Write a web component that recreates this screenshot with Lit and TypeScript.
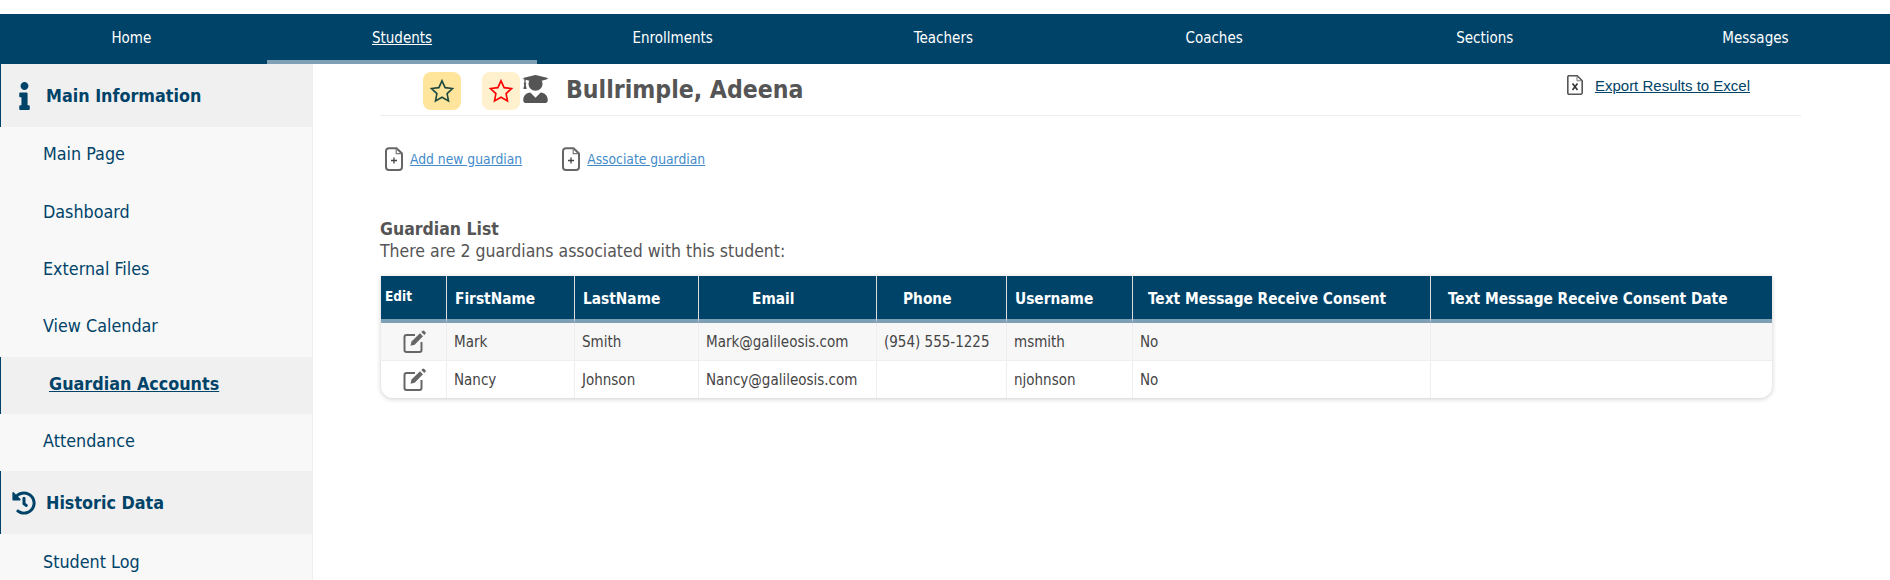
import { LitElement, html, css } from "lit";
import { customElement } from "lit/decorators.js";

const NAV = ["Home", "Students", "Enrollments", "Teachers", "Coaches", "Sections", "Messages"];
const ROWS = [
  ["Mark", "Smith", "Mark@galileosis.com", "(954) 555-1225", "msmith", "No", ""],
  ["Nancy", "Johnson", "Nancy@galileosis.com", "", "njohnson", "No", ""],
];
const HEAD = ["FirstName", "LastName", "Email", "Phone", "Username", "Text Message Receive Consent", "Text Message Receive Consent Date"];
const HCLS = ["h-first", "h-last", "h-email", "h-phone", "h-user", "h-consent", "h-date"];

const star = (color: string) => html`<svg class="star" viewBox="0 0 24 24"><path d="M12 2.6l2.9 6.3 6.8.8-5 4.7 1.3 6.8-6-3.4-6 3.4 1.3-6.8-5-4.7 6.8-.8z" fill="none" stroke=${color} stroke-width="1.5" stroke-linejoin="miter"/></svg>`;
const docPlus = html`<svg class="doc" viewBox="0 0 18 24"><path d="M4 1.2h7.5L17 6.500V20a3 3 0 0 1-3 3H4a3 3 0 0 1-3-3V4.200a3 3 0 0 1 3-3z" fill="none" stroke="#666" stroke-width="2"/><path d="M11.200 1.200v5.500H17" fill="none" stroke="#777" stroke-width="1.200"/><path d="M9 10.500v6M6 13.500h6" stroke="#444" stroke-width="1.300"/></svg>`;
const docX = html`<svg class="xls" viewBox="0 0 16 20"><path d="M1.600.8h8.600l5 5v12a1.400 1.400 0 0 1-1.400 1.400H1.600A1.400 1.400 0 0 1 .8 18V2A1.400 1.400 0 0 1 1.600.8z" fill="#fff" stroke="#555" stroke-width="1.600"/><path d="M10 .8v5h5.200" fill="none" stroke="#777"/><path d="M5.500 8.500l5 6.500M10.500 8.500l-5 6.500" stroke="#333" stroke-width="1.600"/></svg>`;
const edit = html`<svg class="edit" viewBox="0 0 24 24"><path d="M13 5H4.500A2 2 0 0 0 2.500 7v13a2 2 0 0 0 2 2h13a2 2 0 0 0 2-2v-8" fill="none" stroke="#666" stroke-width="2"/><path d="M8.500 15.800l1-4.200 8.500-8.300 3 3-8.300 8.500z" fill="#666"/><path d="M19.300 2l1-1a1.400 1.400 0 0 1 2 0l1 1a1.400 1.400 0 0 1 0 2l-1 1z" fill="#666"/></svg>`;
const info = html`<svg class="ic-info" viewBox="0 0 192 512"><path fill="#004369" d="M20 424.229h20V279.771H20c-11.046 0-20-8.954-20-20V212c0-11.046 8.954-20 20-20h112c11.046 0 20 8.954 20 20v212.229h20c11.046 0 20 8.954 20 20V492c0 11.046-8.954 20-20 20H20c-11.046 0-20-8.954-20-20v-47.771c0-11.046 8.954-20 20-20zM96 0C56.235 0 24 32.235 24 72s32.235 72 72 72 72-32.235 72-72S135.764 0 96 0z"/></svg>`;
const history = html`<svg class="ic-hist" viewBox="0 0 512 512"><path fill="#004369" d="M504 255.531c.253 136.64-111.18 248.372-247.82 248.468-59.015.042-113.223-20.53-155.822-54.911-11.077-8.94-11.905-25.541-1.839-35.607l11.267-11.267c8.609-8.609 22.353-9.551 31.891-1.984C173.062 425.135 212.781 440 256 440c101.705 0 184-82.311 184-184 0-101.705-82.311-184-184-184-48.814 0-93.149 18.969-126.068 49.932l50.754 50.754c10.08 10.08 2.941 27.314-11.313 27.314H24c-8.837 0-16-7.163-16-16V38.627c0-14.254 17.234-21.393 27.314-11.314l49.372 49.372C129.209 34.136 189.552 8 256 8c136.81 0 247.747 110.78 248 247.531zm-180.912 78.784l9.823-12.63c8.138-10.463 6.253-25.542-4.21-33.679L288 256.349V152c0-13.255-10.745-24-24-24h-16c-13.255 0-24 10.745-24 24v135.651l65.409 50.874c10.463 8.137 25.541 6.253 33.679-4.21z"/></svg>`;
const grad = html`<svg class="grad" viewBox="0 0 448 512"><path fill="#555" d="M319.4 320.6L224 416l-95.4-95.4C57.1 323.7 0 382.2 0 454.4v9.6c0 26.5 21.5 48 48 48h352c26.5 0 48-21.5 48-48v-9.6c0-72.2-57.1-130.7-128.6-133.8zM13.6 79.8l6.4 1.5v58.4c-7 4.2-12 11.5-12 20.3 0 8.4 4.6 15.4 11.1 19.7L3.5 242c-1.7 6.9 2.1 14 7.6 14h41.8c5.5 0 9.3-7.1 7.6-14l-15.6-62.3C51.4 175.4 56 168.4 56 160c0-8.8-5-16.1-12-20.3V87.1l66 15.9c-8.6 17.2-14 36.4-14 57 0 70.7 57.3 128 128 128s128-57.3 128-128c0-20.6-5.3-39.8-14-57l96.3-23.2c18.2-4.4 18.2-27.1 0-31.5l-190.4-46c-13-3.1-26.7-3.1-39.7 0L13.6 48.2c-18.1 4.4-18.1 27.2 0 31.6z"/></svg>`;

@customElement("app-root")
export class AppRoot extends LitElement {
  static styles = css`
    :host { display: block; width: 1890px; height: 580px; overflow: hidden; background: #fff; font-family: "DejaVu Sans Condensed", "DejaVu Sans", sans-serif; color: #555; }
    a { color: inherit; }
    .nav { margin-top: 14px; height: 50px; background: #004369; display: grid; grid-template-columns: repeat(7, 270.7px); margin-left: -4px; width: 1894px; }
    .nav a { display: flex; align-items: center; justify-content: center; color: #fff; text-decoration: none; font-size: 15px; box-sizing: border-box; padding-top: 1px; border-bottom: 4px solid transparent; }
    .nav a.on { text-decoration: underline; border-bottom-color: #7f9fb5; }
    .body { display: flex; height: 516px; }
    .side { width: 313px; flex: none; background: #f8f8f8; border-right: 1px solid #eee; box-sizing: border-box; color: #004369; }
    .sh { height: 63px; display: flex; align-items: center; background: #f0f0f0; border-left: 1px solid #004369; font-weight: 700; font-size: 17.800px; position: relative; padding-left: 45px; box-sizing: border-box; }
    .sh .slot { position: absolute; left: 0; top: 0; bottom: 0; width: 46px; display: flex; align-items: center; justify-content: center; }
    .ic-info { height: 28px; width: 11px; }
    .ic-hist { height: 24px; width: 24px; }
    .si { height: 57.400px; display: flex; align-items: center; padding: 0 0 4px 43px; font-size: 17.800px; box-sizing: border-box; }
    .si.cur { background: #f0f0f0; border-left: 1px solid #004369; padding-left: 48px; font-weight: 700; text-decoration: underline; }
    .main { flex: 1; min-width: 0; padding-left: 67px; }
    .title { width: 1421px; height: 51px; border-bottom: 1px solid #eee; box-sizing: content-box; display: flex; align-items: flex-start; position: relative; }
    .sbox { width: 38px; height: 38px; border-radius: 8px; display: flex; align-items: center; justify-content: center; margin-top: 8px; }
    .s1 { background: #ffe59b; margin-left: 43px; }
    .s2 { background: #fff1cd; margin-left: 21px; }
    .star { width: 26px; height: 26px; }
    .grad { width: 25px; height: 28px; margin: 11px 0 0 3px; }
    .name { font-size: 24.600px; font-weight: 700; margin: 10px 0 0 18px; line-height: 32px; color: #555; }
    .export { margin-left: auto; margin-right: 51px; margin-top: 11px; display: flex; align-items: center; gap: 12px; font: 15px "Liberation Sans", Arial, sans-serif; color: #004369; }
    .xls { width: 16px; height: 20px; }
    .links { display: flex; margin: 31px 0 0 5px; height: 24px; align-items: center; }
    .links a { display: flex; align-items: center; font-size: 13.750px; color: #428bca; }
    .links a + a { margin-left: 40px; }
    .doc { width: 18px; height: 24px; margin-right: 7px; }
    .gl { margin-top: 47px; font-size: 17.500px; line-height: 22px; color: #555; }
    .gl b { display: block; }
    .tbl { margin: 14px 0 0 1px; width: 1391px; border-collapse: separate; border-spacing: 0; table-layout: fixed; border-radius: 0 0 12px 12px; box-shadow: 0 1px 5px rgba(0,0,0,.2); overflow: hidden; }
    .c0 { width: 66px; }
    .c1 { width: 128px; }
    .c2 { width: 124px; }
    .c3 { width: 178px; }
    .c4 { width: 130px; }
    .c5 { width: 126px; }
    .c6 { width: 298px; }
    th { background: #004369; color: #fff; height: 41px; border-bottom: 4px solid #7f9fb5; border-right: 1px solid #ddd; font-weight: 700; font-size: 15.300px; padding: 2px 8px 0; text-align: left; box-sizing: content-box; white-space: nowrap; }
    th:last-child, td:last-child { border-right: 0; }
    th.h-edit { font-size: 13.500px; padding: 0 0 3px 4px; height: 40px; }
    th.h-email { padding-left: 53px; }
    th.h-phone { padding-left: 26px; }
    th.h-consent { padding-left: 15px; }
    th.h-date { padding-left: 17px; }
    td { height: 37px; padding: 1px 7px 0; font-size: 15px; color: #444; border-right: 1px solid #eee; white-space: nowrap; box-sizing: border-box; }
    tr.a td { background: #f7f7f7; border-bottom: 1px solid #eee; height: 38px; }
    td.e { padding: 0; text-align: center; }
    .edit { width: 24px; height: 24px; display: inline-block; vertical-align: middle; }
  `;

  render() {
    return html`
      <div class="nav">${NAV.map((n) => html`<a href="#" class=${n === "Students" ? "on" : ""}>${n}</a>`)}</div>
      <div class="body">
        <aside class="side">
          <div class="sh"><span class="slot">${info}</span>Main Information</div>
          <div class="si">Main Page</div>
          <div class="si">Dashboard</div>
          <div class="si">External Files</div>
          <div class="si">View Calendar</div>
          <div class="si cur">Guardian Accounts</div>
          <div class="si">Attendance</div>
          <div class="sh"><span class="slot">${history}</span>Historic Data</div>
          <div class="si">Student Log</div>
        </aside>
        <main class="main">
          <div class="title">
            <span class="sbox s1">${star("#1f4a3f")}</span>
            <span class="sbox s2">${star("#f00")}</span>
            ${grad}
            <span class="name">Bullrimple, Adeena</span>
            <a href="#" class="export">${docX}<span>Export Results to Excel</span></a>
          </div>
          <div class="links">
            <a href="#">${docPlus}<span>Add new guardian</span></a>
            <a href="#">${docPlus}<span>Associate guardian</span></a>
          </div>
          <div class="gl"><b>Guardian List</b>There are 2 guardians associated with this student:</div>
          <table class="tbl">
            <colgroup>
              <col class="c0" /><col class="c1" /><col class="c2" /><col class="c3" />
              <col class="c4" /><col class="c5" /><col class="c6" /><col />
            </colgroup>
            <thead><tr>
              <th class="h-edit">Edit</th>
              ${HEAD.map((h, i) => html`<th class=${HCLS[i]}>${h}</th>`)}
            </tr></thead>
            <tbody>
              ${ROWS.map((r, i) => html`<tr class=${i === 0 ? "a" : ""}><td class="e">${edit}</td>${r.map((c) => html`<td>${c}</td>`)}</tr>`)}
            </tbody>
          </table>
        </main>
      </div>
    `;
  }
}
